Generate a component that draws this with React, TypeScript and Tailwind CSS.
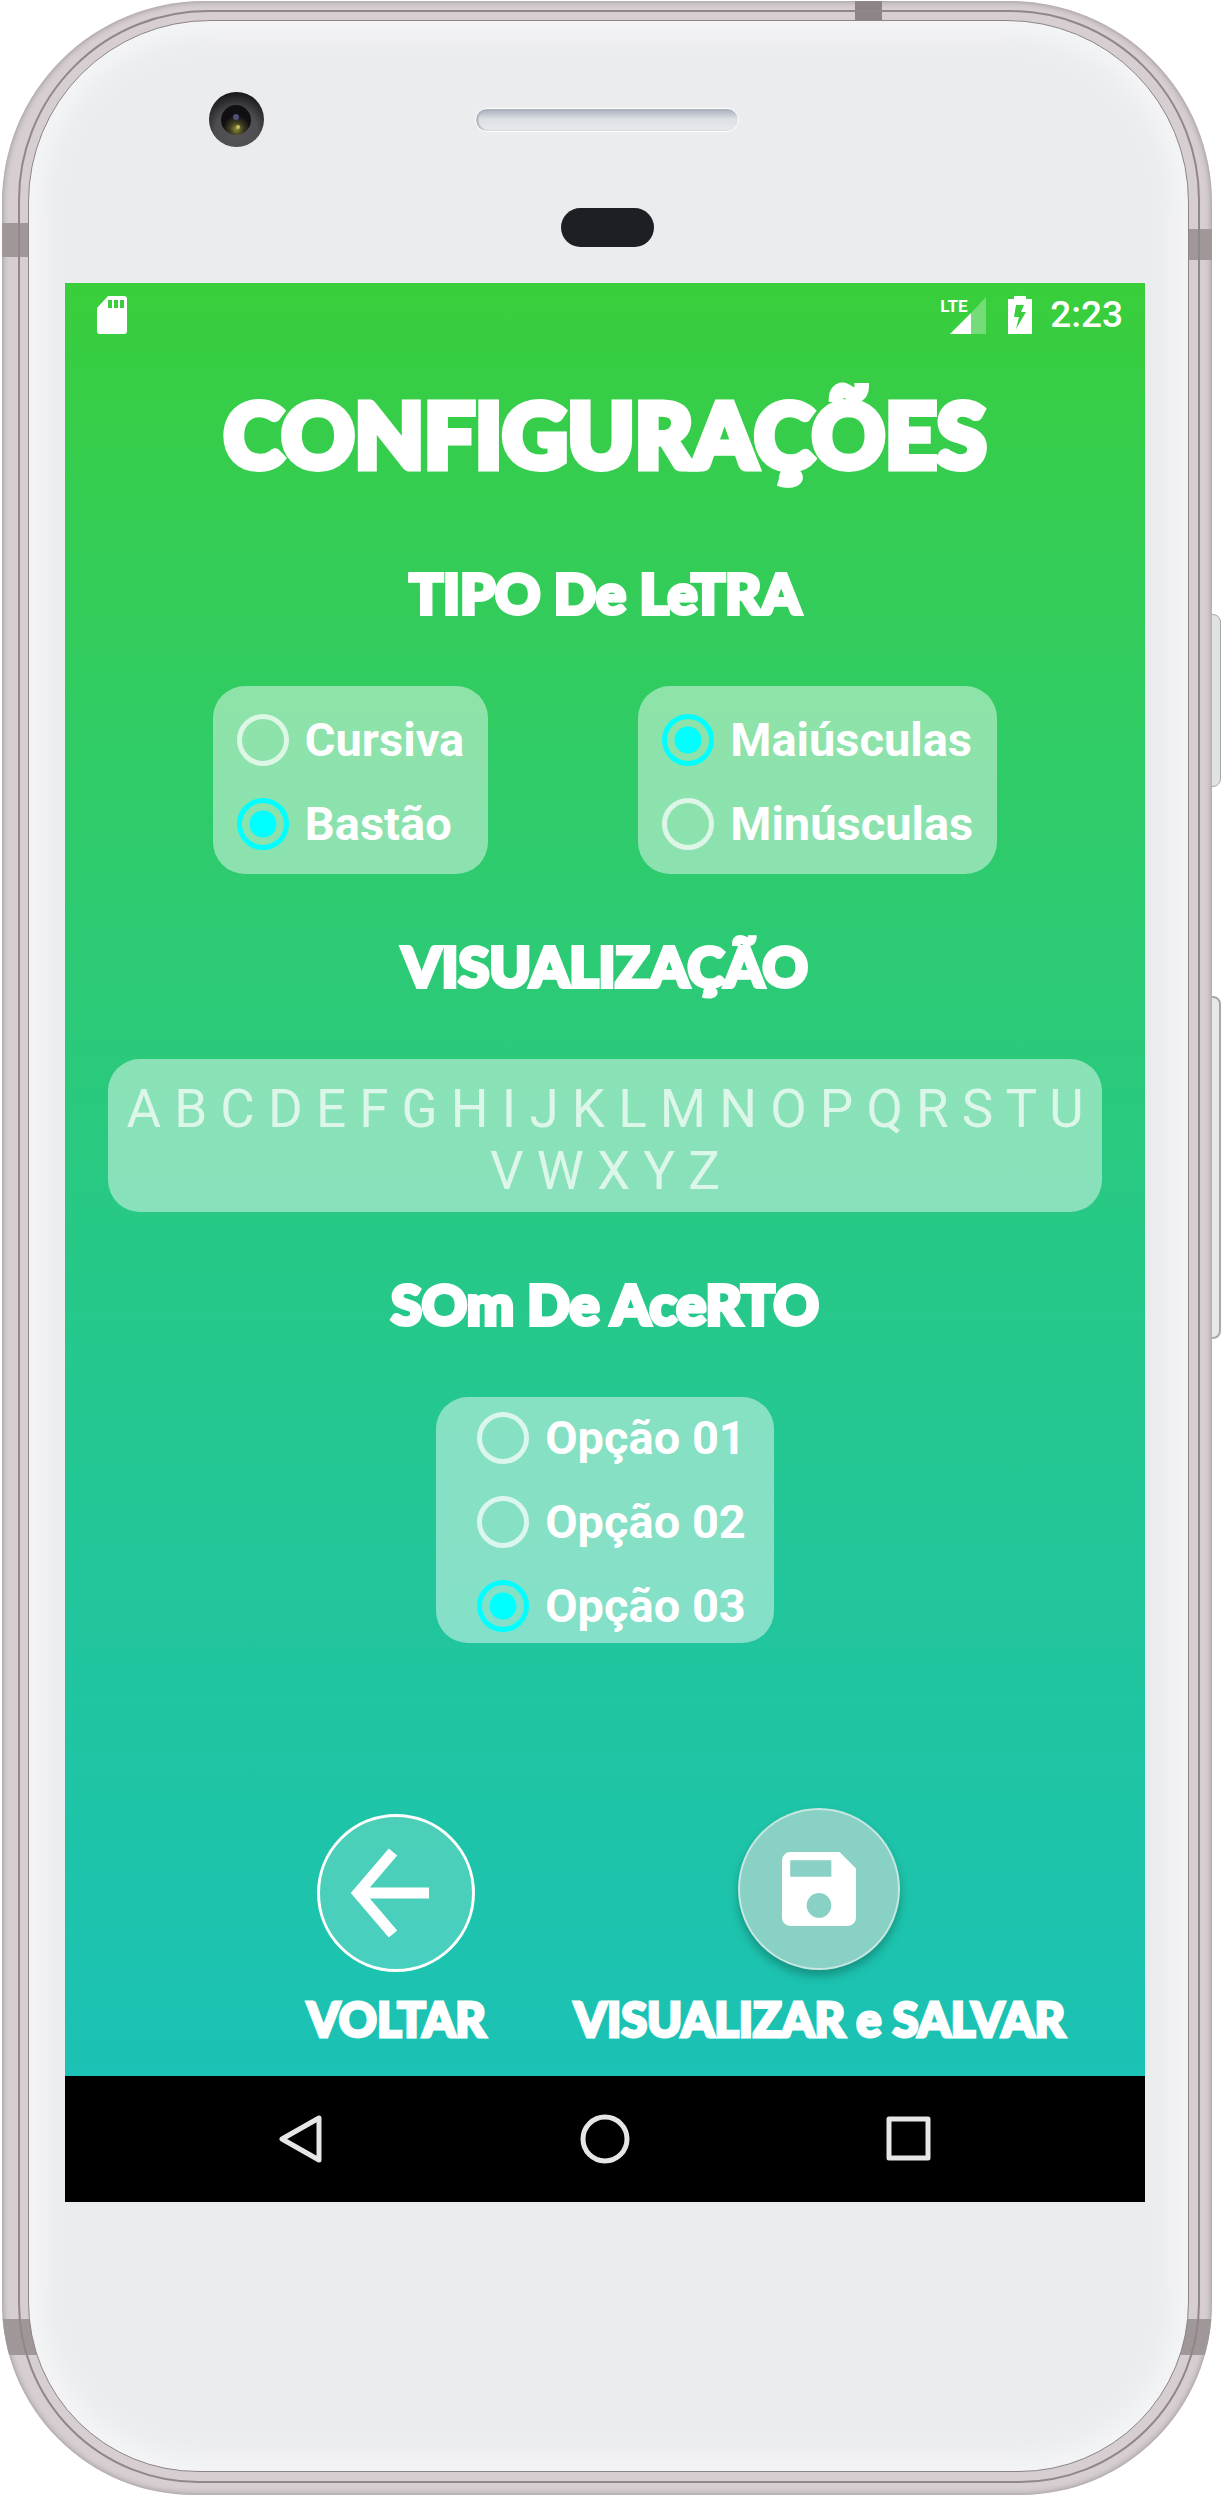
import { useState, type ReactNode } from "react";

function RadioOption({
  name,
  label,
  checked,
  onSelect,
}: {
  name: string;
  label: string;
  checked: boolean;
  onSelect: (label: string) => void;
}) {
  return (
    <label className="flex h-[52px] cursor-pointer items-center gap-4">
      <input
        type="radio"
        name={name}
        checked={checked}
        onChange={() => onSelect(label)}
        className="size-[52px] shrink-0 appearance-none rounded-full border-[5px] border-white/70 checked:border-[#00ffff] checked:bg-[radial-gradient(circle,#00ffff_13px,transparent_14px)]"
      />
      <span className="text-[47px] leading-[54px] font-bold">{label}</span>
    </label>
  );
}

function RadioCard({
  name,
  title,
  options,
  value,
  onSelect,
  className,
}: {
  name: string;
  title: string;
  options: string[];
  value: string;
  onSelect: (label: string) => void;
  className: string;
}) {
  return (
    <div
      role="radiogroup"
      aria-label={title}
      className={`flex flex-col gap-8 rounded-[32px] bg-white/45 ${className}`}
    >
      {options.map((label) => (
        <RadioOption
          key={label}
          name={name}
          label={label}
          checked={value === label}
          onSelect={onSelect}
        />
      ))}
    </div>
  );
}

function Section({ title, children }: { title: string; children: ReactNode }) {
  return (
    <section className="flex flex-col items-center gap-[61px]">
      <h2 className="font-[Lato,sans-serif] text-[56px] leading-16 font-black [-webkit-text-stroke:4px_white]">
        {title}
      </h2>
      {children}
    </section>
  );
}

function StatusBar() {
  return (
    <div className="flex h-[63px] items-center justify-between pr-[22px] pl-8">
      <svg viewBox="0 0 30 38" className="h-[38px] w-[30px]" aria-hidden="true">
        <path
          fill="#fff"
          fillRule="evenodd"
          d="M11 0h16a3 3 0 0 1 3 3v32a3 3 0 0 1-3 3H3a3 3 0 0 1-3-3V12ZM11 4v8h4V4Zm6 0v8h4V4Zm6 0v8h4V4Z"
        />
      </svg>
      <div className="flex items-center">
        <div className="relative h-[38px] w-[46px]">
          <span className="absolute top-0 left-0 text-[17px] leading-5 font-bold">LTE</span>
          <svg viewBox="0 0 46 38" className="h-[38px] w-[46px]" aria-hidden="true">
            <path fill="#fff" fillOpacity=".3" d="M46 1v37H31V17Z" />
            <path fill="#fff" d="M31 17v21H10Z" />
          </svg>
        </div>
        <svg viewBox="0 0 24 38" className="ml-[22px] h-[38px] w-6" aria-hidden="true">
          <path
            fill="#fff"
            fillRule="evenodd"
            d="M6 0h12v3h6v35H0V3h6ZM8 9 6 21h5L8 33l10-17h-5l3-7Z"
          />
        </svg>
        <span className="ml-[18px] text-[37px] leading-10 font-medium">2:23</span>
      </div>
    </div>
  );
}

function ActionButton({
  label,
  circle,
  children,
}: {
  label: string;
  circle: string;
  children: ReactNode;
}) {
  return (
    <button type="button" className="flex cursor-pointer flex-col items-center gap-6">
      <span className="flex h-[164px] items-center">
        <span className={`flex items-center justify-center rounded-full ${circle}`}>{children}</span>
      </span>
      <span className="font-[Lato,sans-serif] text-[47px] leading-12 font-black whitespace-nowrap [-webkit-text-stroke:3px_white]">
        {label}
      </span>
    </button>
  );
}

function NavBar() {
  return (
    <nav className="grid h-[126px] grid-cols-3 place-items-center bg-black px-[84px]">
      <button type="button" aria-label="Voltar" className="cursor-pointer">
        <svg viewBox="0 0 50 50" className="size-[50px]" fill="none" stroke="#e6e6e6" strokeWidth="5" strokeLinejoin="round">
          <path d="M43 4v42L6 25Z" />
        </svg>
      </button>
      <button type="button" aria-label="Início" className="cursor-pointer">
        <svg viewBox="0 0 50 50" className="size-[50px]" fill="none" stroke="#e6e6e6" strokeWidth="5">
          <circle cx="25" cy="25" r="22" />
        </svg>
      </button>
      <button type="button" aria-label="Recentes" className="cursor-pointer">
        <svg viewBox="0 0 50 50" className="size-[50px]" fill="none" stroke="#e6e6e6" strokeWidth="5" strokeLinejoin="round">
          <rect x="5" y="5" width="39" height="39" />
        </svg>
      </button>
    </nav>
  );
}

function PhoneTop() {
  return (
    <div className="flex flex-col pt-[71px] pb-9 pl-1">
      <div className="grid grid-cols-[1fr_264px_1fr] items-center">
        <div className="pl-[140px]">
          <svg viewBox="0 0 55 55" className="size-[55px]" aria-hidden="true">
            <defs>
              <radialGradient id="lensRing" cx=".5" cy=".7" r=".7">
                <stop offset="0" stopColor="#55555a" />
                <stop offset=".55" stopColor="#4c4c51" />
                <stop offset="1" stopColor="#161618" />
              </radialGradient>
              <radialGradient id="lensGlow" cx=".52" cy=".8" r=".45">
                <stop offset="0" stopColor="#8f8c3c" />
                <stop offset=".5" stopColor="#3d3c20" />
                <stop offset="1" stopColor="#101014" />
              </radialGradient>
            </defs>
            <circle cx="27.5" cy="27.5" r="27.5" fill="url(#lensRing)" />
            <circle cx="27" cy="28" r="15" fill="url(#lensGlow)" />
            <circle cx="27" cy="25" r="3" fill="#50507a" />
            <circle cx="29" cy="35" r="2" fill="#c2c060" />
          </svg>
        </div>
        <div className="h-6 rounded-full border border-white bg-linear-to-b from-[#a7aeba] via-[#dcdfe3] via-45% to-[#e9ebed] shadow-[inset_2px_0_2px_#a7aeba]" />
      </div>
      <div className="mx-auto mt-[61px] h-[39px] w-[93px] rounded-full bg-[#1d1f24]" />
    </div>
  );
}

function PhoneFrame({ children }: { children: ReactNode }) {
  return (
    <div className="relative pt-px pr-[10px] pb-px pl-[2px]">
      <div className="absolute top-[614px] right-px h-[173px] w-4 rounded-r-lg border border-[#a7a9a8] bg-[#dfe3e1]" />
      <div className="absolute top-[996px] right-px h-[343px] w-4 rounded-r-lg border-2 border-[#a7a9a8] bg-[#e8e9e4]" />
      <div className="relative overflow-hidden rounded-t-[202px] rounded-b-[192px] bg-[#d6ced1] pt-[9px] pr-3 pb-3 pl-4 shadow-[inset_0_0_6px_#8f868a]">
        <div className="absolute top-0 left-[853px] h-5 w-[27px] bg-[#8d8488]" />
        <div className="absolute top-[222px] left-0 h-[34px] w-7 bg-[#a09799]" />
        <div className="absolute top-[228px] right-0 h-[31px] w-7 bg-[#a09799]" />
        <div className="absolute bottom-[140px] left-0 h-9 w-9 bg-[#a09799]" />
        <div className="absolute right-0 bottom-[140px] h-9 w-9 bg-[#a09799]" />
        <div className="relative rounded-t-[190px] rounded-b-[180px] border-2 border-[#918689] pt-2 pr-[9px] pb-[9px] pl-2">
          <div className="rounded-t-[182px] rounded-b-[170px] border border-[#8d8488] bg-[#ebecee] pr-[43px] pb-[269px] pl-9 shadow-[inset_0_0_24px_14px_#f4f5f7]">
            {children}
          </div>
        </div>
      </div>
    </div>
  );
}

const ALPHABET = "A B C D E F G H I J K L M N O P Q R S T U V W X Y Z";

export default function App() {
  const [style, setStyle] = useState("Bastão");
  const [letterCase, setLetterCase] = useState("Maiúsculas");
  const [sound, setSound] = useState("Opção 03");

  return (
    <div className="min-h-screen bg-white font-[Roboto,sans-serif] text-white">
      <PhoneFrame>
        <PhoneTop />
        <main className="bg-linear-to-b from-[#39ce3a] to-[#1bc2b5]">
          <StatusBar />
          <h1 className="mt-[33px] text-center font-[Lato,sans-serif] text-[90px] leading-[108px] font-black [-webkit-text-stroke:7px_white]">
            CONFIGURAÇÕES
          </h1>
          <div className="mt-[74px] flex flex-col gap-[60px]">
            <Section title="TIPO De LeTRA">
              <div className="flex justify-center gap-[150px]">
                <RadioCard
                  name="style"
                  title="Tipo de letra"
                  options={["Cursiva", "Bastão"]}
                  value={style}
                  onSelect={setStyle}
                  className="px-6 pt-7 pb-6"
                />
                <RadioCard
                  name="case"
                  title="Maiúsculas ou minúsculas"
                  options={["Maiúsculas", "Minúsculas"]}
                  value={letterCase}
                  onSelect={setLetterCase}
                  className="px-6 pt-7 pb-6"
                />
              </div>
            </Section>
            <Section title="VISUALIZAÇÃO">
              <div className="self-stretch px-[43px]">
                <p
                  className={`rounded-[32px] bg-white/45 px-4 pt-[19px] pb-[10px] text-center text-[53px] leading-[62px] text-white/70 ${
                    style === "Cursiva" ? "italic" : ""
                  }`}
                >
                  {letterCase === "Maiúsculas" ? ALPHABET : ALPHABET.toLowerCase()}
                </p>
              </div>
            </Section>
            <Section title="SOm De AceRTO">
              <RadioCard
                name="sound"
                title="Som de acerto"
                options={["Opção 01", "Opção 02", "Opção 03"]}
                value={sound}
                onSelect={setSound}
                className="pt-[15px] pr-7 pb-[11px] pl-[41px]"
              />
            </Section>
          </div>
          <div className="mt-[164px] flex justify-end gap-[88px] pr-20 pb-[33px]">
            <ActionButton label="VOLTAR" circle="mt-2 size-[158px] border-[3px] border-white bg-white/20">
              <svg viewBox="0 0 80 90" className="mr-3 h-[90px] w-20" fill="none" stroke="#fff" strokeWidth="11" aria-hidden="true">
                <path d="M43 4 8 45l35 41M9 45h70" />
              </svg>
            </ActionButton>
            <ActionButton
              label="VISUALIZAR e SALVAR"
              circle="size-[162px] border-2 border-white/50 bg-[#8ad1c5] shadow-[0_6px_10px_rgba(0,0,0,0.25)]"
            >
              <svg viewBox="3 3 18 18" className="size-[74px]" fill="#fff" aria-hidden="true">
                <path d="M17 3H5a2 2 0 0 0-2 2v14a2 2 0 0 0 2 2h14a2 2 0 0 0 2-2V7l-4-4zm-5 16a3 3 0 1 1 0-6 3 3 0 0 1 0 6zm3-10H5V5h10v4z" />
              </svg>
            </ActionButton>
          </div>
        </main>
        <NavBar />
      </PhoneFrame>
    </div>
  );
}
